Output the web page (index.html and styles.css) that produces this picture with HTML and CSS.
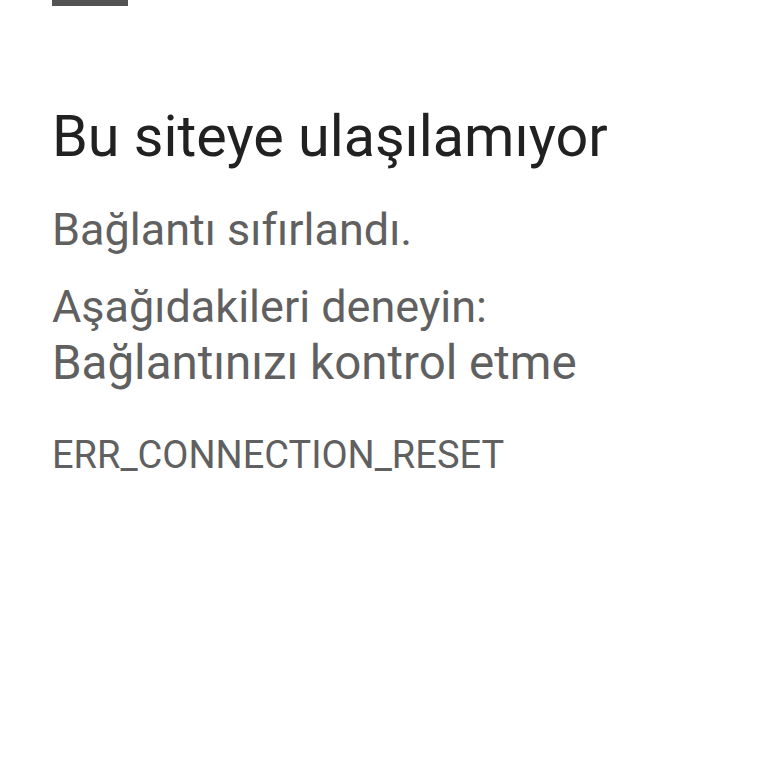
FILE: index.html
```html
<!DOCTYPE html>
<html lang="tr">
<head>
    <meta charset="UTF-8">
    <meta name="viewport" content="width=device-width, initial-scale=1.0">
    <title>Bu siteye ulaşılamıyor</title>
    <link rel="stylesheet" href="styles.css">
</head>
<body>

    <div class="error-page">
        <div class="icon-bar"></div>

        <h1 class="title">Bu siteye ulaşılamıyor</h1>

        <p class="summary">Bağlantı sıfırlandı.</p>

        <div class="suggestions">
            <p>Aşağıdakileri deneyin:</p>
            <p class="suggestion-item">Bağlantınızı kontrol etme</p>
        </div>

        <p class="error-code">ERR_CONNECTION_RESET</p>
    </div>

</body>
</html>
```

FILE: styles.css
```css
body {
    margin: 0;
    font-family: Roboto, "Noto Sans", Arial, sans-serif;
    background-color: #ffffff;
}
.error-page {
    padding: 0 52px;
}
.icon-bar {
    width: 76px;
    height: 6px;
    background-color: #535353;
}
.title {
    margin: 0;
    padding-top: 99px;
    font-size: 57.5px;
    font-weight: 400;
    line-height: 64px;
    color: #212121;
}
.summary {
    margin: 0;
    padding-top: 33px;
    font-size: 45px;
    line-height: 56px;
    color: #606060;
}
.suggestions {
    padding-top: 21px;
    font-size: 45px;
    line-height: 56px;
    color: #606060;
}
.suggestions p {
    margin: 0;
}
.suggestion-item {
    font-size: 47.5px;
}
.error-code {
    margin: 0;
    padding-top: 40px;
    font-size: 38px;
    line-height: 48px;
    color: #606060;
}
```
